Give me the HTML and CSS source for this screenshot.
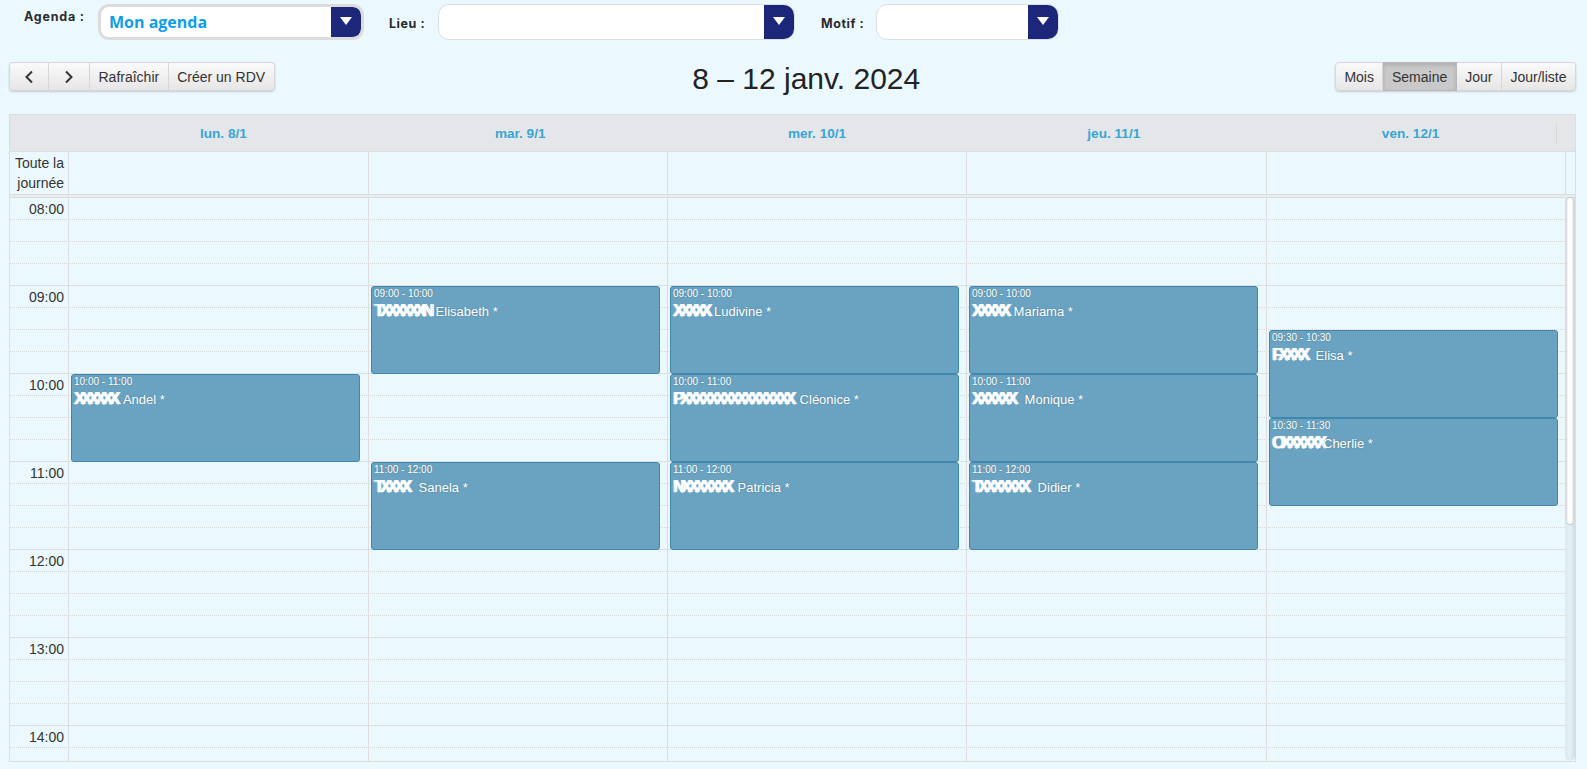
FILE: index.html
```html
<!DOCTYPE html>
<html lang="fr">
<head>
<meta charset="utf-8">
<title>Agenda</title>
<link rel="stylesheet" href="styles.css">
</head>
<body>
<div class="filters">
  <label class="filter-label label-agenda">Agenda :</label>
  <div class="select select-agenda"><span class="select-value">Mon agenda</span><span class="select-arrow"></span></div>
  <label class="filter-label label-lieu">Lieu :</label>
  <div class="select select-lieu"><span class="select-arrow"></span></div>
  <label class="filter-label label-motif">Motif :</label>
  <div class="select select-motif"><span class="select-arrow"></span></div>
</div>
<div class="toolbar">
  <div class="btn-group">
    <button class="btn btn-nav btn-prev"><svg width="10" height="14" viewBox="0 0 10 14"><path d="M8 1.5 2.5 7 8 12.5" fill="none" stroke="#333" stroke-width="2"/></svg></button>
    <button class="btn btn-nav btn-next"><svg width="10" height="14" viewBox="0 0 10 14"><path d="M2 1.5 7.5 7 2 12.5" fill="none" stroke="#333" stroke-width="2"/></svg></button>
    <button class="btn">Rafraîchir</button>
    <button class="btn">Créer un RDV</button>
  </div>
  <h2 class="title">8 – 12 janv. 2024</h2>
  <div class="btn-group">
    <button class="btn">Mois</button>
    <button class="btn btn-active">Semaine</button>
    <button class="btn">Jour</button>
    <button class="btn">Jour/liste</button>
  </div>
</div>
<div class="calendar">
  <div class="head">
    <div class="axis"></div>
    <div class="day-name">lun. 8/1</div>
    <div class="day-name">mar. 9/1</div>
    <div class="day-name">mer. 10/1</div>
    <div class="day-name">jeu. 11/1</div>
    <div class="day-name">ven. 12/1</div>
    <div class="head-end"></div>
  </div>
  <div class="allday">
    <div class="axis allday-label">Toute la journée</div>
    <div class="allday-cell"></div>
    <div class="allday-cell"></div>
    <div class="allday-cell"></div>
    <div class="allday-cell"></div>
    <div class="allday-cell"></div>
    <div class="allday-end"></div>
  </div>
  <div class="divider"></div>
  <div class="body">
    <div class="main">
      <div class="slots">
        <div class="slot hour"><span>08:00</span></div><div class="slot"></div><div class="slot"></div><div class="slot"></div>
        <div class="slot hour"><span>09:00</span></div><div class="slot"></div><div class="slot"></div><div class="slot"></div>
        <div class="slot hour"><span>10:00</span></div><div class="slot"></div><div class="slot"></div><div class="slot"></div>
        <div class="slot hour"><span>11:00</span></div><div class="slot"></div><div class="slot"></div><div class="slot"></div>
        <div class="slot hour"><span>12:00</span></div><div class="slot"></div><div class="slot"></div><div class="slot"></div>
        <div class="slot hour"><span>13:00</span></div><div class="slot"></div><div class="slot"></div><div class="slot"></div>
        <div class="slot hour"><span>14:00</span></div><div class="slot"></div>
      </div>
      <div class="columns">
        <div class="col">
          <div class="event" style="top:177px"><div class="ev-time">10:00 - 11:00</div><div class="ev-title"><span class="blur" style="width:46px">XXXXXX</span> Andel *</div></div>
        </div>
        <div class="col">
          <div class="event" style="top:89px"><div class="ev-time">09:00 - 10:00</div><div class="ev-title"><span class="blur" style="width:58px">TXXXXXXN</span> Elisabeth *</div></div>
          <div class="event" style="top:265px"><div class="ev-time">11:00 - 12:00</div><div class="ev-title"><span class="blur" style="width:41px">TXXXX</span> Sanela *</div></div>
        </div>
        <div class="col">
          <div class="event" style="top:89px"><div class="ev-time">09:00 - 10:00</div><div class="ev-title"><span class="blur" style="width:41px">XXXXX</span>Ludivine *</div></div>
          <div class="event" style="top:177px"><div class="ev-time">10:00 - 11:00</div><div class="ev-title"><span class="blur" style="width:123px">PXXXXXXXXXXXXXXXX</span> Cléonice *</div></div>
          <div class="event" style="top:265px"><div class="ev-time">11:00 - 12:00</div><div class="ev-title"><span class="blur" style="width:61px">NXXXXXXX</span> Patricia *</div></div>
        </div>
        <div class="col">
          <div class="event" style="top:89px"><div class="ev-time">09:00 - 10:00</div><div class="ev-title"><span class="blur" style="width:38px">XXXXX</span> Mariama *</div></div>
          <div class="event" style="top:177px"><div class="ev-time">10:00 - 11:00</div><div class="ev-title"><span class="blur" style="width:49px">XXXXXX</span> Monique *</div></div>
          <div class="event" style="top:265px"><div class="ev-time">11:00 - 12:00</div><div class="ev-title"><span class="blur" style="width:62px">TXXXXXXX</span> Didier *</div></div>
        </div>
        <div class="col">
          <div class="event" style="top:133px"><div class="ev-time">09:30 - 10:30</div><div class="ev-title"><span class="blur" style="width:40px">FXXXX</span> Elisa *</div></div>
          <div class="event" style="top:221px"><div class="ev-time">10:30 - 11:30</div><div class="ev-title"><span class="blur" style="width:51px">OXXXXXX</span>Cherlie *</div></div>
        </div>
      </div>
    </div>
    <div class="scrollbar"><div class="thumb"></div></div>
  </div>
</div>
</body>
</html>
```
FILE: styles.css
```css
* { box-sizing: border-box; }
html, body { margin: 0; height: 100%; overflow: hidden; }
body {
  background: #ebf9ff;
  color: #333;
  font-family: "Liberation Sans", Arial, sans-serif;
  font-size: 14px;
  padding: 0 11px 0 9px;
}
.filters { display: flex; align-items: flex-start; height: 62px; padding-top: 4px; }
.filter-label { font-family: Inter, "Liberation Sans", sans-serif; font-weight: 700; font-size: 12.5px; letter-spacing: .55px; color: #2b2b2b; line-height: 14px; white-space: nowrap; }
.label-agenda { margin: 6px 14px 0 15px; width: 60px; letter-spacing: .8px; }
.label-lieu { margin: 13px 12px 0 25px; width: 37px; }
.label-motif { margin: 13px 13px 0 26px; width: 42px; }
.select { display: flex; background: #fff; border: 1px solid #dcdfe3; border-radius: 11px; height: 36px; overflow: hidden; }
.select-agenda { width: 266px; border-width: 3px; border-color: #dcdcdc; }
.select-lieu { width: 357px; }
.select-motif { width: 183px; }
.select-value { font-family: "Open Sans", sans-serif; font-weight: 700; font-size: 16px; color: #0b9fea; line-height: 30px; padding-left: 8px; }
.select-arrow { margin-left: auto; width: 30px; background: #1c2779; display: flex; align-items: center; justify-content: center; border-radius: 0 8px 8px 0; }
.select-arrow::after { content: ""; border-left: 6px solid transparent; border-right: 6px solid transparent; border-top: 8px solid #fff; margin-top: -2px; }
.toolbar { display: flex; justify-content: space-between; align-items: center; height: 29px; }
.title { margin: 4px 0 0 3px; font-size: 30px; font-weight: 400; color: #222; line-height: 36px; }
.btn-group { display: flex; height: 29px; border-radius: 4px; box-shadow: 0 1px 2px rgba(0,0,0,.18); }
.btn {
  font: 14px "Liberation Sans", Arial, sans-serif;
  color: #333;
  padding: 0 8.5px;
  height: 29px;
  border: 1px solid #d6d6d6;
  border-left-width: 0;
  background: linear-gradient(#fafafa, #e6e6e6);
}
.btn:first-child { border-left-width: 1px; border-radius: 4px 0 0 4px; }
.btn:last-child { border-radius: 0 4px 4px 0; }
.btn-nav { padding: 0; display: flex; align-items: center; justify-content: center; }
.btn-prev { width: 40px; }
.btn-next { width: 41px; }
.btn-active { background: #c9c9c9; box-shadow: inset 0 2px 4px rgba(0,0,0,.15); border-color: #b9b9b9; }
.calendar { margin-top: 23px; height: 648px; border: 1px solid #dddddd; width: 1567px; overflow: hidden; }
.head { display: grid; grid-template-columns: 65px repeat(5, 296.8px) 1fr; height: 37px; background: #e4e6ea; border-bottom: 1px solid #dddddd; align-items: center; position: relative; }
.day-name { text-align: center; font-weight: 700; font-size: 13.6px; color: #38a6d3; }
.head-end { position: absolute; right: 18px; top: 8px; height: 21px; border-left: 1px solid #d8d8d8; }
.allday { display: grid; grid-template-columns: 59px 300px 299px 299px 300px 299px 1fr; height: 42px; }
.axis { min-width: 0; }
.allday-label { text-align: right; padding: 1px 4px 0 0; font-size: 14px; line-height: 20px; color: #333; border-right: 1px solid #dddddd; }
.allday-cell { border-right: 1px solid #dddddd; }
.divider { height: 3px; background: #e9edf0; border-top: 1px solid #dddddd; }
.body { display: flex; height: 564px; overflow: hidden; }
.main { position: relative; width: 1555px; }
.slot { height: 22px; border-top: 1px dotted #d6d6d6; display: flex; }
.slot.hour { border-top: 1px solid #dddddd; }
.slot span { width: 58px; text-align: right; padding-right: 4px; line-height: 22px; font-size: 14px; color: #333; white-space: nowrap; }
.columns { position: absolute; inset: 0; display: grid; grid-template-columns: 300px 299px 299px 300px 299px; padding-left: 58px; }
.col { position: relative; border-left: 1px solid #dddddd; }
.event {
  position: absolute;
  left: 2px;
  width: 289px;
  height: 88px;
  background: #6aa3c1;
  border: 1px solid #3f87ad;
  border-radius: 3px;
  color: #fff;
  padding: 1px 2px;
  text-shadow: 0 0 2px rgba(0,0,0,.25);
  overflow: hidden;
}
.ev-time { font-size: 10px; line-height: 12px; white-space: nowrap; }
.ev-title { font-size: 13px; line-height: 15px; height: 15px; margin-top: 3px; white-space: nowrap; }
.blur { display: inline-block; font-size: 16px; line-height: 15px; letter-spacing: -3.67px; text-shadow: 1.5px 0 0 #fff, -1px 0 0 rgba(255,255,255,.7), 0 1px 0 rgba(255,255,255,.5); white-space: nowrap; }
.scrollbar { flex: 1; background: linear-gradient(90deg, #dbe8ef, #e4f0f7 50%, #cfdde6); border-radius: 0 0 5px 5px; }
.thumb { height: 328px; background: linear-gradient(90deg, #d8d8d8, #fff 30%, #fff 70%, #d0d0d0); border-radius: 5px; border: 1px solid #dadada; border-bottom-color: #bdbdbd; border-top-color: #c4c4c4; }
```
